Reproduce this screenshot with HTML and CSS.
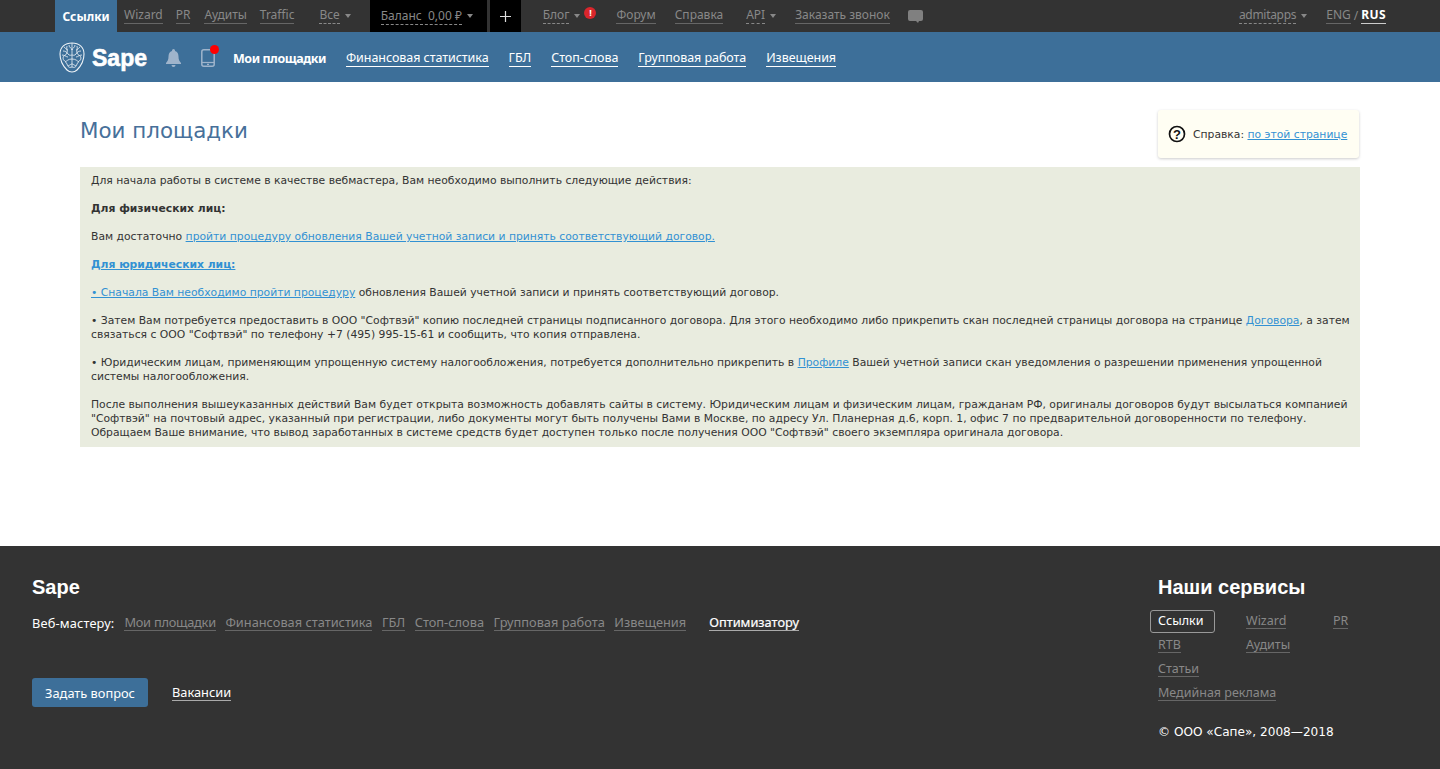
FILE: index.html
```html
<!DOCTYPE html>
<html lang="ru">
<head>
<meta charset="utf-8">
<title>Мои площадки</title>
<link rel="stylesheet" href="styles.css">
</head>
<body>
<div class="topbar">
  <a class="tab">Ссылки</a>
  <a class="tl g7">Wizard</a>
  <a class="tl g13">PR</a>
  <a class="tl g14">Аудиты</a>
  <a class="tl g13">Traffic</a>
  <span class="dd g25"><a class="dash">Все</a><i class="caret"></i></span>
  <div class="balance"><a class="dash">Баланс&nbsp; 0,00 ₽</a><i class="caret"></i></div>
  <div class="plus"><svg width="11" height="11" viewBox="0 0 11 11"><path d="M5.500 0v11M0 5.500h11" stroke="#ddd" stroke-width="1.200"/></svg></div>
  <span class="dd g22"><a class="dash">Блог</a><i class="caret"></i></span>
  <span class="alert">!</span>
  <a class="tl g20">Форум</a>
  <a class="tl g19">Справка</a>
  <span class="dd g23"><a class="dash">API</a><i class="caret"></i></span>
  <a class="tl g19">Заказать звонок</a>
  <svg class="chat" width="15" height="14" viewBox="0 0 15 14"><path d="M2 0h11a2 2 0 0 1 2 2v7a2 2 0 0 1-2 2h-2l-1 2-2-2H2a2 2 0 0 1-2-2V2a2 2 0 0 1 2-2z" fill="#808080"/></svg>
  <span class="dd right"><a class="dash narrow">admitapps</a><i class="caret"></i></span>
  <a class="tl g19">ENG</a>
  <span class="slash">/</span>
  <a class="tl rus">RUS</a>
</div>
<div class="mainbar">
  <svg class="brain" width="26" height="31" viewBox="0 0 26 31" fill="none" stroke="#eef3f7" stroke-width=".8">
    <path d="M13 1C6 1 1 5 1 12c0 6 3 12 7 16 2 2 3 2 5 2s3 0 5-2c4-4 7-10 7-16C25 5 20 1 13 1z" stroke-width="1.100"/>
    <path d="M13 1v24M8 4c-1 3 1 4 0 7s-4 2-4 5 3 3 4 6 2 4 5 3M18 4c1 3-1 4 0 7s4 2 4 5-3 3-4 6-2 4-5 3M4 9c2 0 4 1 5 3s4 1 4 1M22 9c-2 0-4 1-5 3s-4 1-4 1M6 20c2-1 3-3 7-3M20 20c-2-1-3-3-7-3M10 3c0 3 3 3 3 5M16 3c0 3-3 3-3 5M5 5c2 1 2 3 4 3M21 5c-2 1-2 3-4 3M3 13c3 0 4 2 6 2M23 13c-3 0-4 2-6 2M9 24c2-1 3-2 4-2M17 24c-2-1-3-2-4-2"/>
  </svg>
  <span class="logo">Sape</span>
  <svg class="bell" width="15" height="18" viewBox="0 0 15 18"><path d="M7.500 0a1.500 1.500 0 0 1 1.500 1.500v.6c2.500.7 3.500 3 3.500 5.400 0 3 .8 4.500 2.500 6.500v1H0v-1c1.700-2 2.500-3.500 2.500-6.500 0-2.400 1-4.700 3.500-5.400v-.6A1.500 1.500 0 0 1 7.500 0zM5.500 16h4a2 2 0 0 1-4 0z" fill="#9fb4cb"/></svg>
  <span class="phone">
    <svg width="14" height="18" viewBox="0 0 14 18" fill="none"><rect x=".8" y=".8" width="12.400" height="16.400" rx="2" stroke="#9fb4cb" stroke-width="1.500"/><path d="M1 13.500h12" stroke="#9fb4cb" stroke-width="1.200"/><path d="M6 15.300h2" stroke="#9fb4cb" stroke-width="1.200"/></svg>
    <i class="dot"></i>
  </span>
  <b class="cur">Мои площадки</b>
  <a class="ml">Финансовая статистика</a>
  <a class="ml">ГБЛ</a>
  <a class="ml">Стоп-слова</a>
  <a class="ml">Групповая работа</a>
  <a class="ml">Извещения</a>
</div>
<main class="content">
  <div class="head">
    <h1>Мои площадки</h1>
    <div class="help">
      <svg width="18" height="18" viewBox="0 0 18 18" fill="none"><circle cx="9" cy="9" r="7.500" stroke="#111" stroke-width="1.700"/><text x="9" y="13.500" text-anchor="middle" class="q">?</text></svg>
      <span>Справка: <a>по этой странице</a></span>
    </div>
  </div>
  <div class="note">
    Для начала работы в системе в качестве вебмастера, Вам необходимо выполнить следующие действия:<br><br>
    <b>Для физических лиц:</b><br><br>
    Вам достаточно <a>пройти процедуру обновления Вашей учетной записи и принять соответствующий договор.</a><br><br>
    <a><b>Для юридических лиц:</b></a><br><br>
    <a>• Сначала Вам необходимо пройти процедуру</a> обновления Вашей учетной записи и принять соответствующий договор.<br><br>
    • Затем Вам потребуется предоставить в ООО "Софтвэй" копию последней страницы подписанного договора. Для этого необходимо либо прикрепить скан последней страницы договора на странице <a>Договора</a>, а затем связаться с ООО "Софтвэй" по телефону +7 (495) 995-15-61 и сообщить, что копия отправлена.<br><br>
    • Юридическим лицам, применяющим упрощенную систему налогообложения, потребуется дополнительно прикрепить в <a>Профиле</a> Вашей учетной записи скан уведомления о разрешении применения упрощенной системы налогообложения.<br><br>
    После выполнения вышеуказанных действий Вам будет открыта возможность добавлять сайты в систему. Юридическим лицам и физическим лицам, гражданам РФ, оригиналы договоров будут высылаться компанией "Софтвэй" на почтовый адрес, указанный при регистрации, либо документы могут быть получены Вами в Москве, по адресу Ул. Планерная д.6, корп. 1, офис 7 по предварительной договоренности по телефону. Обращаем Ваше внимание, что вывод заработанных в системе средств будет доступен только после получения ООО "Софтвэй" своего экземпляра оригинала договора.
  </div>
</main>
<footer class="footer">
  <div class="fleft">
    <div class="ftitle">Sape</div>
    <div class="frow">
      <span class="flabel">Веб-мастеру:</span>
      <a class="fl first">Мои площадки</a>
      <a class="fl">Финансовая статистика</a>
      <a class="fl">ГБЛ</a>
      <a class="fl">Стоп-слова</a>
      <a class="fl">Групповая работа</a>
      <a class="fl">Извещения</a>
      <a class="fw">Оптимизатору</a>
    </div>
    <div class="fbottom">
      <a class="btn">Задать вопрос</a>
      <a class="fw vac">Вакансии</a>
    </div>
  </div>
  <div class="fright">
    <div class="ftitle">Наши сервисы</div>
    <div class="svc">
      <span class="cell"><a class="svc-on">Ссылки</a></span><span class="cell"><a class="fl">Wizard</a></span><span class="cell"><a class="fl">PR</a></span>
      <span class="cell"><a class="fl">RTB</a></span><span class="cell"><a class="fl">Аудиты</a></span><span class="cell"></span>
      <span class="cell"><a class="fl">Статьи</a></span><span class="cell"></span><span class="cell"></span>
      <span class="cell wide"><a class="fl">Медийная реклама</a></span>
    </div>
    <div class="copy">© ООО «Сапе», 2008—2018</div>
  </div>
</footer>
</body>
</html>
```
FILE: styles.css
```css
* { box-sizing: border-box; }
html, body { margin: 0; padding: 0; }
body { font-family: "DejaVu Sans", sans-serif; font-size: 10.77px; color: #333; background: #fff; }
a { text-decoration: none; }

.topbar { height: 32px; background: #333; display: flex; align-items: center; padding-left: 55px; padding-bottom: 1px; font-family: "Noto Sans", sans-serif; font-size: 12px; color: #888; }
.tab { align-self: stretch; width: 62px; margin-bottom: -1px; background: #3d6f99; color: #fff; font-weight: 700; display: flex; align-items: center; justify-content: center; }
.tl { color: #888; border-bottom: 1px solid #666; line-height: 16px; }
.dash { color: #888; border-bottom: 1px dashed #888; line-height: 16px; }
.narrow { letter-spacing: -.3px; }
.dd { display: flex; align-items: center; }
.caret { display: inline-block; margin-left: 5px; border: 3.500px solid transparent; border-top: 4px solid #888; border-bottom: 0; }
.g7 { margin-left: 7px; } .g13 { margin-left: 13px; } .g14 { margin-left: 14px; } .g19 { margin-left: 19px; } .g20 { margin-left: 20px; } .g22 { margin-left: 22px; } .g23 { margin-left: 23px; } .g25 { margin-left: 25px; }
.balance { align-self: stretch; width: 117px; margin: 0 0 -1px 19px; background: #000; display: flex; align-items: center; padding-left: 11px; white-space: nowrap; }
.plus { align-self: stretch; width: 31px; margin: 0 0 -1px 3px; background: #000; display: flex; align-items: center; justify-content: center; }
.alert { width: 12px; height: 12px; margin: -6px 0 0 4px; border-radius: 50%; background: #d9262c; color: #fff; font-size: 9px; font-weight: 700; line-height: 12px; text-align: center; }
.chat { margin: 2px 0 0 18px; }
.right { margin-left: auto; }
.slash { margin: 0 3px; color: #888; }
.rus { color: #fff; font-weight: 700; border-bottom-color: #ccc; margin-right: 54px; letter-spacing: .4px; }

.mainbar { height: 50px; background: #3d6f99; display: flex; align-items: center; padding-left: 59px; padding-top: 2px; font-family: "Noto Sans", sans-serif; font-size: 12.5px; color: #fff; }
.logo { margin-left: 7px; font-family: "Liberation Sans", sans-serif; font-size: 23px; font-weight: 700; -webkit-text-stroke: .6px #fff; }
.brain { margin-top: -2px; }
.bell { margin-left: 19px; }
.phone { position: relative; margin-left: 20px; height: 18px; display: flex; }
.dot { position: absolute; top: -4px; left: 9px; width: 9px; height: 9px; border-radius: 50%; background: #f00; }
.cur { margin-left: 18px; letter-spacing: -.45px; }
.ml { margin-left: 20px; color: #fff; border-bottom: 1px solid #fff; line-height: 17px; letter-spacing: -.05px; }

.content { height: 464px; padding: 28px 80px 0; }
.head { display: flex; justify-content: space-between; height: 57px; }
h1 { margin: 8px 0 0; font-family: "DejaVu Sans", sans-serif; font-size: 21.4px; font-weight: 400; color: #47709a; line-height: 26px; }
.help { width: 201px; height: 48px; margin-right: 1px; background: #fffef3; border-radius: 3px; box-shadow: 0 1px 3px rgba(0,0,0,.2); display: flex; align-items: center; padding-left: 10px; gap: 7px; }
.help a, .note a { color: #3291d3; text-decoration: underline; }
.q { font-family: "Liberation Sans", sans-serif; font-size: 13px; font-weight: 700; fill: #111; }
.note { background: #e9ecdf; padding: 7px 8px 7px 11px; line-height: 14px; color: #333; }

.footer { height: 223px; background: #333; display: flex; justify-content: space-between; padding: 30px 0 0 32px; font-family: "Noto Sans", sans-serif; font-size: 12.8px; color: #fff; }
.ftitle { font-family: "Liberation Sans", sans-serif; font-size: 20px; font-weight: 700; line-height: 22px; color: #fff; }
.frow { display: flex; align-items: center; margin-top: 16px; }
.flabel { margin-right: 10px; letter-spacing: .15px; }
.fl { color: #888; border-bottom: 1px solid #666; line-height: 15px; }
.first { letter-spacing: -.25px; }
.frow .fl + .fl { margin-left: 9.500px; }
.fw { color: #fff; border-bottom: 1px solid #aaa; line-height: 15px; margin-left: 23px; }
.frow .fw { -webkit-text-stroke: .2px #fff; }
.fbottom { display: flex; align-items: center; margin-top: 46px; }
.btn { width: 116px; height: 29px; background: #3d6f99; color: #fff; border-radius: 3px; display: flex; align-items: center; justify-content: center; }
.fbottom .vac { margin-left: 24px; }
.fright { width: 282px; }
.svc { display: grid; grid-template-columns: 88px 87px 1fr; grid-auto-rows: 24px; margin-top: 11px; font-size: 12.5px; }
.cell { display: flex; align-items: center; }
.wide { grid-column: 1 / -1; }
.svc-on { color: #fff; border: 1px solid #999; border-radius: 3px; padding: 0 0 0 7px; width: 65px; height: 23px; line-height: 20px; margin-left: -8px; }
.copy { margin-top: 20px; color: #fff; font-family: "DejaVu Sans", sans-serif; font-size: 12.1px; }
```
